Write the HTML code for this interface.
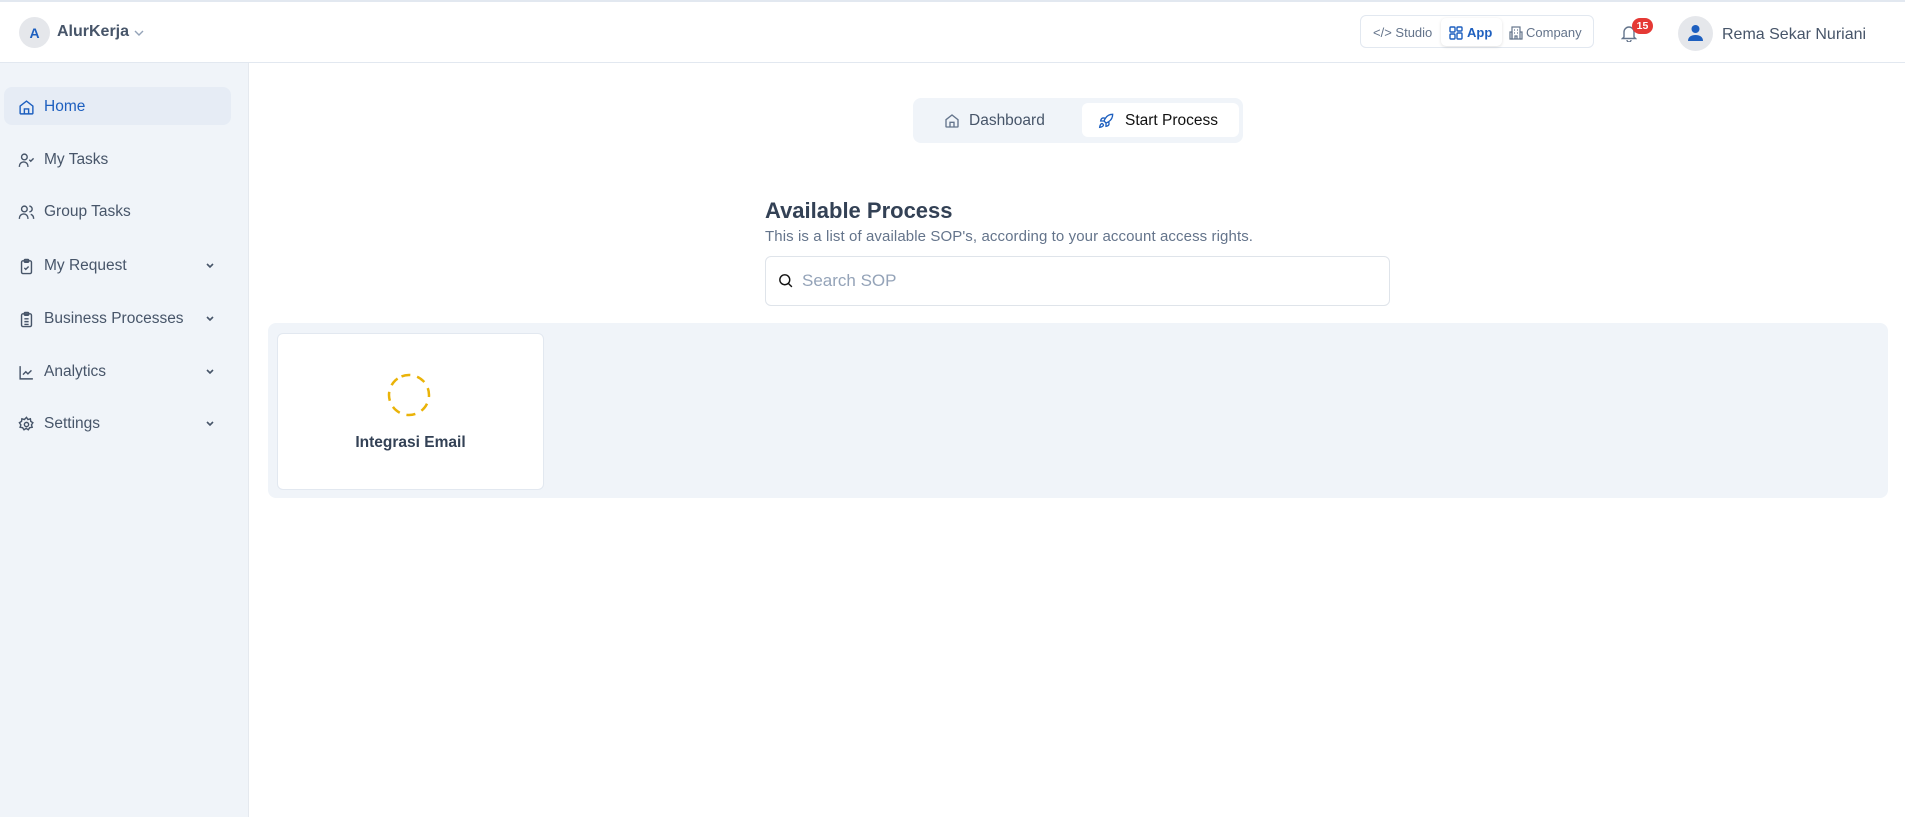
<!DOCTYPE html>
<html><head><meta charset="utf-8"><style>
*{box-sizing:border-box;margin:0;padding:0}
body{width:1905px;height:817px;position:relative;font-family:"Liberation Sans",sans-serif;background:#fff;overflow:hidden;color:#334155}
.hdr{position:absolute;left:0;top:0;width:1905px;height:63px;border-top:2px solid #e2e8f0;border-bottom:1px solid #e2e8f0;background:#fff}
.side{position:absolute;left:0;top:63px;width:249px;height:754px;background:#f0f4f9;border-right:1px solid #e5e9ef}
.item{position:absolute;left:4px;width:227px;height:38px;border-radius:8px;display:flex;align-items:center;font-size:15.5px;color:#475569}
.item svg.i{position:absolute;left:14px;top:12px}
.item span{position:absolute;left:40px;top:11px}
.item .ch{position:absolute;left:201px;top:16px}
.abs{position:absolute}
</style></head><body>
<div class="hdr">
 <div class="abs" style="left:19px;top:15px;width:31px;height:31px;border-radius:50%;background:#e5e7eb;color:#1d5fbf;font-size:14px;font-weight:bold;display:flex;align-items:center;justify-content:center">A</div>
 <div class="abs" style="left:57px;top:21px;font-size:16px;font-weight:bold;color:#475569">AlurKerja</div>
 <svg class="abs" style="left:133px;top:27px" width="12" height="8" viewBox="0 0 12 8"><path d="M2 2l4 4 4-4" fill="none" stroke="#94a3b8" stroke-width="1.4"/></svg>
 <div class="abs" style="left:1360px;top:13px;width:234px;height:33px;border:1px solid #e2e8f0;border-radius:6px"></div>
 <div class="abs" style="left:1441px;top:16px;width:61px;height:28px;background:#fff;border-radius:5px;box-shadow:0 1px 3px rgba(0,0,0,.12)"></div>
 <div class="abs" style="left:1373px;top:23px;font-size:13px;color:#64748b">&lt;/&gt; Studio</div>
 <svg class="abs" style="left:1449px;top:24px" width="14" height="14" viewBox="0 0 14 14" fill="none" stroke="#1d5fbf" stroke-width="1.4"><rect x="1" y="1" width="5" height="5" rx="1"/><rect x="8" y="1" width="5" height="4" rx="1"/><rect x="1" y="8" width="5" height="5" rx="1"/><rect x="8" y="7" width="5" height="6" rx="1"/></svg>
 <div class="abs" style="left:1467px;top:23px;font-size:13px;font-weight:bold;color:#1d5fbf">App</div>
 <svg class="abs" style="left:1509px;top:24px" width="14" height="14" viewBox="0 0 14 14" fill="none" stroke="#64748b" stroke-width="1.2"><rect x="3" y="1" width="8" height="12"/><path d="M1 6h2v7H1zM11 6h2v7h-2M5 4h1M8 4h1M5 7h1M8 7h1M6 13v-3h2v3"/></svg>
 <div class="abs" style="left:1526px;top:23px;font-size:13px;color:#64748b">Company</div>
 <svg class="abs" style="left:1621px;top:22px" width="16" height="18" viewBox="0 0 16 18" fill="none" stroke="#64748b" stroke-width="1.4"><path d="M3 13V8a5 5 0 0 1 10 0v5l1.5 1.5h-13zM6 16a2 2 0 0 0 4 0"/></svg>
 <div class="abs" style="left:1632px;top:16px;width:21px;height:16px;border-radius:8px;background:#e53935;color:#fff;font-size:10.5px;font-weight:bold;text-align:center;line-height:16px">15</div>
 <div class="abs" style="left:1678px;top:14px;width:35px;height:35px;border-radius:50%;background:#e5e7eb"></div>
 <svg class="abs" style="left:1686px;top:21px" width="19" height="19" viewBox="0 0 19 19" fill="#1d5fbf"><circle cx="9.5" cy="6" r="4"/><path d="M2 18c0-4 3-6 7.5-6s7.5 2 7.5 6z"/></svg>
 <div class="abs" style="left:1722px;top:24px;font-size:16px;color:#475569">Rema Sekar Nuriani</div>
</div>
<div class="side">
 <div class="item" style="top:24px;background:#e6ecf5;color:#1d5fbf"><svg class="i" width="17" height="17" viewBox="0 0 24 24" fill="none" stroke="#1d5fbf" stroke-width="2"><path d="M3 10l9-7 9 7v10a1 1 0 0 1-1 1H4a1 1 0 0 1-1-1z"/><path d="M9 21v-7h6v7"/></svg><span>Home</span></div>
 <div class="item" style="top:77px"><svg class="i" width="17" height="17" viewBox="0 0 24 24" fill="none" stroke="#475569" stroke-width="2"><circle cx="9" cy="7" r="4"/><path d="M2 21v-1a6 6 0 0 1 12 0v1M16 11l2 2 4-4"/></svg><span>My Tasks</span></div>
 <div class="item" style="top:129px"><svg class="i" width="17" height="17" viewBox="0 0 24 24" fill="none" stroke="#475569" stroke-width="2"><circle cx="9" cy="7" r="4"/><path d="M2 21v-1a6 6 0 0 1 12 0v1M16 3a4 4 0 0 1 0 8M22 21v-1a6 6 0 0 0-4-5.5"/></svg><span>Group Tasks</span></div>
 <div class="item" style="top:183px"><svg class="i" width="17" height="17" viewBox="0 0 24 24" fill="none" stroke="#475569" stroke-width="2"><rect x="5" y="4" width="14" height="18" rx="2"/><rect x="9" y="2" width="6" height="4" rx="1"/><path d="M9 14l2 2 4-4"/></svg><span>My Request</span><svg class="ch" width="10" height="8" viewBox="0 0 10 8"><path d="M2 2l3 3 3-3" fill="none" stroke="#475569" stroke-width="1.6"/></svg></div>
 <div class="item" style="top:236px"><svg class="i" width="17" height="17" viewBox="0 0 24 24" fill="none" stroke="#475569" stroke-width="2"><rect x="5" y="4" width="14" height="18" rx="2"/><rect x="9" y="2" width="6" height="4" rx="1"/><path d="M9 11h6M9 15h6M9 19h6"/></svg><span>Business Processes</span><svg class="ch" width="10" height="8" viewBox="0 0 10 8"><path d="M2 2l3 3 3-3" fill="none" stroke="#475569" stroke-width="1.6"/></svg></div>
 <div class="item" style="top:289px"><svg class="i" width="17" height="17" viewBox="0 0 24 24" fill="none" stroke="#475569" stroke-width="2"><path d="M3 3v18h18M7 15l4-4 3 3 5-5"/></svg><span>Analytics</span><svg class="ch" width="10" height="8" viewBox="0 0 10 8"><path d="M2 2l3 3 3-3" fill="none" stroke="#475569" stroke-width="1.6"/></svg></div>
 <div class="item" style="top:341px"><svg class="i" width="17" height="17" viewBox="0 0 24 24" fill="none" stroke="#475569" stroke-width="2"><circle cx="12" cy="12" r="3"/><path d="M12 2l2 3 3.5-1 .5 3.5 3 2-2 3 1 3.5-3.5.5-2 3-3-2-3 2-2-3-3.5-.5 1-3.5-2-3 3-2 .5-3.5 3.5 1z"/></svg><span>Settings</span><svg class="ch" width="10" height="8" viewBox="0 0 10 8"><path d="M2 2l3 3 3-3" fill="none" stroke="#475569" stroke-width="1.6"/></svg></div>
</div>
<div class="abs" style="left:913px;top:98px;width:330px;height:45px;background:#f0f4f9;border-radius:8px"></div>
<div class="abs" style="left:1082px;top:103px;width:157px;height:34px;background:#fff;border-radius:6px"></div>
<svg class="abs" style="left:944px;top:113px" width="16" height="16" viewBox="0 0 24 24" fill="none" stroke="#64748b" stroke-width="2"><path d="M3 10l9-7 9 7v10a1 1 0 0 1-1 1H4a1 1 0 0 1-1-1z"/><path d="M9 21v-7h6v7"/></svg>
<div class="abs" style="left:969px;top:112px;font-size:15.5px;color:#475569">Dashboard</div>
<svg class="abs" style="left:1098px;top:113px" width="16" height="16" viewBox="0 0 24 24" fill="none" stroke="#1d5fbf" stroke-width="2"><path d="M4.5 16.5c-1.5 1.3-2 5-2 5s3.7-.5 5-2c.7-.8.7-2.1-.1-2.9a2.2 2.2 0 0 0-2.9-.1zM12 15l-3-3a22 22 0 0 1 2-4A13 13 0 0 1 22 2c0 2.7-.8 7.5-6 11a22 22 0 0 1-4 2zM9 12H4s.5-3 2-4c1.6-1.1 5 0 5 0M12 15v5s3-.5 4-2c1.1-1.6 0-5 0-5"/></svg>
<div class="abs" style="left:1125px;top:112px;font-size:15.5px;color:#111">Start Process</div>
<div class="abs" style="left:765px;top:198px;font-size:22px;font-weight:bold;color:#334155">Available Process</div>
<div class="abs" style="left:765px;top:228px;font-size:15px;color:#64748b;letter-spacing:0.1px">This is a list of available SOP's, according to your account access rights.</div>
<div class="abs" style="left:765px;top:256px;width:625px;height:50px;border:1px solid #dfe4ea;border-radius:6px"></div>
<svg class="abs" style="left:777px;top:272px" width="17" height="17" viewBox="0 0 24 24" fill="none" stroke="#111" stroke-width="2"><circle cx="11" cy="11" r="7"/><path d="M16 16l5 5"/></svg>
<div class="abs" style="left:802px;top:271px;font-size:17px;color:#94a3b8">Search SOP</div>
<div class="abs" style="left:268px;top:323px;width:1620px;height:175px;background:#f0f4f9;border-radius:8px"></div>
<div class="abs" style="left:277px;top:333px;width:267px;height:157px;background:#fff;border:1px solid #e2e8f0;border-radius:6px"></div>
<svg class="abs" style="left:386px;top:372px" width="46" height="46" viewBox="0 0 46 46"><circle cx="23" cy="23" r="20" fill="none" stroke="#eab308" stroke-width="2.5" stroke-dasharray="9 7" transform="rotate(-112 23 23)"/></svg>
<div class="abs" style="left:277px;top:434px;width:267px;text-align:center;font-size:15.5px;font-weight:bold;color:#334155">Integrasi Email</div>
</body></html>
